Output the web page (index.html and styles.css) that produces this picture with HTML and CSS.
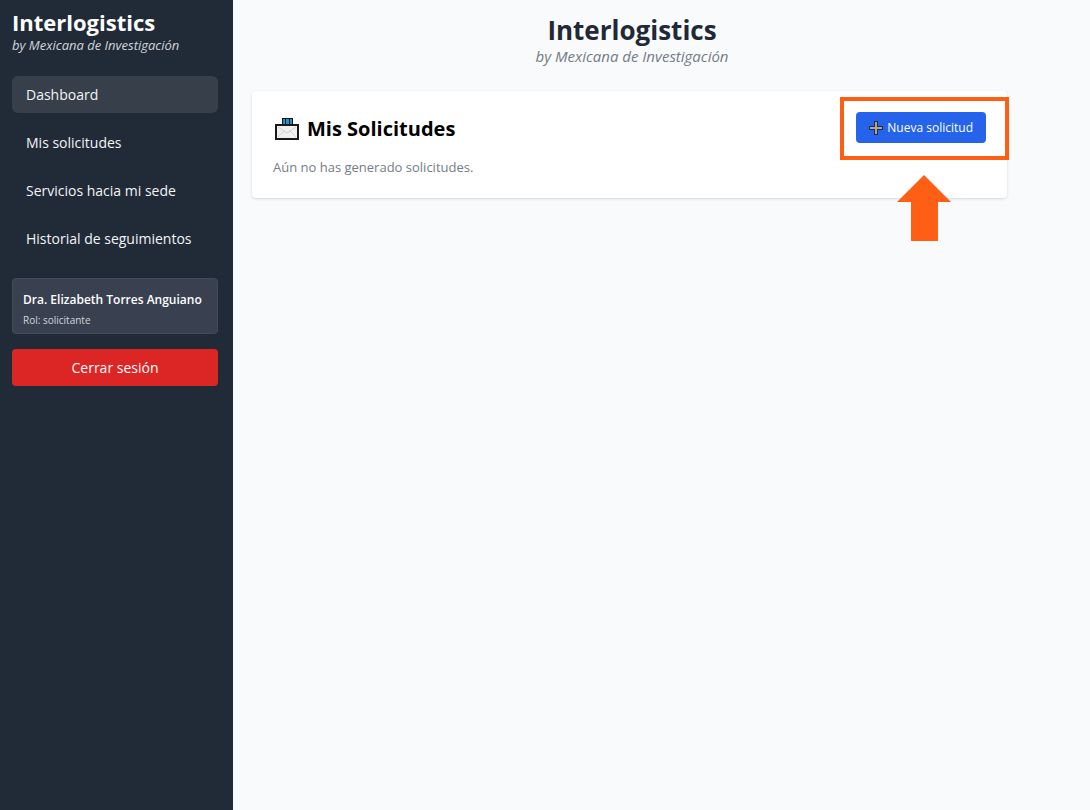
FILE: index.html
```html
<!DOCTYPE html>
<html lang="es">
    <head>
        <meta charset="UTF-8">
        <meta name="viewport" content="width=device-width, initial-scale=1">
        <title>Interlogistics</title>
        <link rel="stylesheet" href="styles.css">
    </head>
    <body>
        <aside class="sidebar">
            <div class="brand">
                <h2>Interlogistics</h2>
                <p>by Mexicana de Investigación</p>
            </div>

            <nav class="menu">
                <a class="active" href="#dashboard">Dashboard</a>
                <a href="#solicitudes">Mis solicitudes</a>
                <a href="#servicios">Servicios hacia mi sede</a>
                <a href="#historial">Historial de seguimientos</a>
            </nav>

            <div class="user">
                <p class="user-name">Dra. Elizabeth Torres Anguiano</p>
                <p class="user-role">Rol: solicitante</p>
            </div>
            <button class="logout" type="button">Cerrar sesión</button>
        </aside>

        <main>
            <header class="top">
                <h1>Interlogistics</h1>
                <p>by Mexicana de Investigación</p>
            </header>

            <section class="card">
                <div class="card-head">
                    <h2>
                        <svg class="mail-icon" viewBox="0 0 24 24" aria-hidden="true">
                            <path d="M7 1h11v7H7z" fill="#111"/>
                            <path d="M8 2h2v5H8zM11 2h3v5h-3zM15 2h2v5h-2z" fill="#1e93cc"/>
                            <path d="M1 8h22v14H1z" fill="#f0f0f0" stroke="#16181a" stroke-width="2"/>
                            <path d="M3 10l9 6 9-6M3 20l6-6M21 20l-6-6" fill="none" stroke="#d2d2d2"/>
                        </svg>
                        Mis Solicitudes
                    </h2>
                    <div class="action">
                        <button class="new-request" type="button">
                            <svg class="plus-icon" viewBox="0 0 14 14" aria-hidden="true">
                                <path d="M5 0h4v5h5v4H9v5H5V9H0V5h5z" fill="#252c44"/>
                                <path d="M7 1v12M1 7h12" stroke="#aaa69c" stroke-width="2"/>
                            </svg>
                            Nueva solicitud
                        </button>
                        <!-- highlight frame and arrow -->
                        <div class="highlight"></div>
                        <svg class="arrow" viewBox="0 0 54 66" aria-hidden="true">
                            <path d="M27 0l27 27H41v39H14V27H0z" fill="#ff5f15"/>
                        </svg>
                    </div>
                </div>
                <p class="empty">Aún no has generado solicitudes.</p>
            </section>
        </main>
    </body>
</html>
```

FILE: styles.css
```css
* {
    box-sizing: border-box;
}

body {
    margin: 0;
    min-height: 100vh;
    display: flex;
    background: #f9fafc;
    font-family: "Open Sans", "Noto Sans", sans-serif;
    font-size: 14px;
    line-height: 20px;
}

h1, h2, p {
    margin: 0;
}

button {
    border: none;
    border-radius: 4px;
    color: white;
    font-family: inherit;
    cursor: pointer;
}

.sidebar {
    flex: none;
    width: 233px;
    padding: 9px 15px 9px 12px;
    background: #212a37;
    color: white;
}

.brand h2 {
    font-size: 22px;
    line-height: 27px;
}

.brand p {
    color: #d1d5db;
    font-size: 13px;
    font-style: italic;
    line-height: 18px;
}

.menu {
    display: flex;
    flex-direction: column;
    gap: 11px;
    margin: 22px 0 21px;
}

.menu a {
    padding: 8px 14px;
    border-radius: 6px;
    color: #f3f4f6;
    line-height: 21px;
    text-decoration: none;
}

.menu a.active, .menu a:hover {
    background: #363f4a;
}

.user {
    margin-bottom: 15px;
    padding: 11px 10px 3px;
    border: 1px solid #414b59;
    border-radius: 4px;
    background: #394150;
}

.user-name {
    font-size: 12px;
    font-weight: 600;
    white-space: nowrap;
}

.user-role {
    color: #d1d5db;
    font-size: 10px;
}

.logout {
    width: 100%;
    padding: 8px;
    background: #dc2626;
    font-size: 14px;
    line-height: 21px;
}

main {
    flex: 1;
    padding: 14px 78px 14px 19px;
}

.top {
    text-align: center;
}

.top h1 {
    color: #1f2937;
    font-size: 26px;
    line-height: 32px;
}

.top p {
    color: #757c87;
    font-size: 15px;
    font-style: italic;
    line-height: 21px;
}

.card {
    margin: 24px 5px 0 0;
    padding: 21px;
    border-radius: 4px;
    background: white;
    box-shadow: 0 1px 3px rgba(0, 0, 0, 0.14);
}

.card-head {
    display: flex;
    justify-content: space-between;
    align-items: flex-start;
}

.card-head h2 {
    display: flex;
    align-items: center;
    gap: 8px;
    padding: 4px 2px;
    font-size: 20px;
    line-height: 26px;
}

.mail-icon {
    width: 24px;
    height: 24px;
}

.action {
    position: relative;
}

.new-request {
    display: flex;
    align-items: center;
    gap: 4px;
    padding: 6px 13px;
    background: #2563eb;
    font-size: 12px;
    line-height: 19px;
}

.plus-icon {
    width: 14px;
    height: 14px;
}

/* drawn over the card, around the button */
.highlight {
    position: absolute;
    inset: -15px -23px -17px -16px;
    border: 4px solid #ff5f15;
    pointer-events: none;
}

.arrow {
    position: absolute;
    top: 63px;
    left: 41px;
    width: 54px;
    height: 66px;
}

.empty {
    margin-top: 11px;
    color: #757c87;
    font-size: 13px;
}
```
